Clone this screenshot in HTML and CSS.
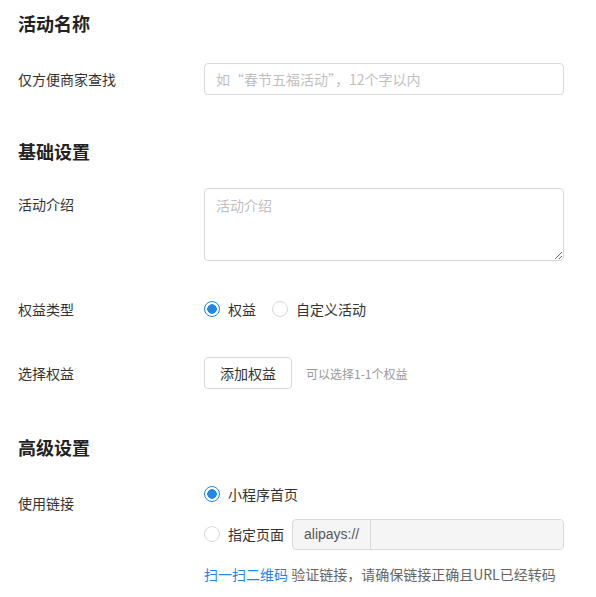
FILE: index.html
```html
<!DOCTYPE html>
<html lang="zh-CN">
<head>
  <meta charset="UTF-8" />
  <meta name="viewport" content="width=device-width, initial-scale=1" />
  <title>活动设置</title>
  <link rel="stylesheet" href="styles.css">
</head>
<body>

<form class="setting-form">
  <section class="section">
    <h2 class="section-title">活动名称</h2>
    <div class="form-row">
      <label class="form-label">仅方便商家查找</label>
      <div class="form-control">
        <input class="text-input" type="text" placeholder="如“春节五福活动”，12个字以内" />
      </div>
    </div>
  </section>

  <section class="section section--basic">
    <h2 class="section-title">基础设置</h2>
    <div class="form-row">
      <label class="form-label">活动介绍</label>
      <div class="form-control">
        <textarea class="text-area" placeholder="活动介绍"></textarea>
      </div>
    </div>
    <div class="form-row">
      <label class="form-label">权益类型</label>
      <div class="form-control radio-group">
        <label class="radio"><input type="radio" name="type" checked /><span class="radio-dot"></span>权益</label>
        <label class="radio"><input type="radio" name="type" /><span class="radio-dot"></span>自定义活动</label>
      </div>
    </div>
    <div class="form-row">
      <label class="form-label">选择权益</label>
      <div class="form-control inline">
        <button type="button" class="btn">添加权益</button>
        <span class="hint">可以选择1-1个权益</span>
      </div>
    </div>
  </section>

  <section class="section section--advanced">
    <h2 class="section-title">高级设置</h2>
    <div class="form-row">
      <label class="form-label form-label--offset">使用链接</label>
      <div class="form-control stack">
        <label class="radio"><input type="radio" name="link" checked /><span class="radio-dot"></span>小程序首页</label>
        <div class="inline">
          <label class="radio"><input type="radio" name="link" /><span class="radio-dot"></span>指定页面</label>
          <div class="input-group">
            <span class="addon">alipays://</span>
            <input class="group-input" type="text" disabled />
          </div>
        </div>
        <p class="help"><a href="#">扫一扫二维码</a> 验证链接，请确保链接正确且URL已经转码</p>
      </div>
    </div>
  </section>
</form>

</body>
</html>
```

FILE: styles.css
```css
body {
  margin: 0;
  font-family: "Noto Sans CJK SC", "Noto Sans", sans-serif;
  font-size: 14px;
  color: #333;
  background: #fff;
}
.setting-form {
  padding: 11px 18px 0;
}
.section {
  margin-bottom: 44px;
}
.section--basic {
  margin-bottom: 46px;
}
.section:last-child {
  margin-bottom: 0;
}
.section-title {
  margin: 0 0 28px;
  font-size: 18px;
  line-height: 24px;
  font-weight: bold;
  color: #222;
}
.section--basic .section-title {
  margin-bottom: 25px;
}
.section--advanced .section-title {
  margin-bottom: 19px;
}
.form-row {
  display: grid;
  grid-template-columns: 186px 360px;
  align-items: start;
  margin-bottom: 32px;
}
.form-row:last-child {
  margin-bottom: 0;
}
.form-label {
  line-height: 32px;
}
.form-label--offset {
  padding-top: 9px;
}
.text-input,
.text-area {
  box-sizing: border-box;
  width: 360px;
  border: 1px solid #d9d9d9;
  border-radius: 4px;
  font-family: inherit;
  font-size: 14px;
  color: #333;
  outline: none;
}
.text-input {
  height: 32px;
  padding: 0 11px;
}
.text-area {
  display: block;
  height: 73px;
  padding: 5px 11px;
  line-height: 22px;
  resize: vertical;
}
.text-input::placeholder,
.text-area::placeholder {
  color: #bfbfbf;
}
.radio-group,
.inline {
  display: flex;
  align-items: center;
  height: 32px;
}
.radio-group {
  gap: 16px;
}
.radio {
  display: inline-flex;
  align-items: center;
  line-height: 32px;
  cursor: pointer;
}
.radio input {
  display: none;
}
.radio-dot {
  box-sizing: border-box;
  width: 16px;
  height: 16px;
  margin-right: 8px;
  border: 1px solid #d9d9d9;
  border-radius: 50%;
  background: #fff;
}
.radio input:checked + .radio-dot {
  border-color: #1f87e8;
  background: radial-gradient(circle, #1f87e8 0 4.5px, #fff 5px);
}
.btn {
  height: 32px;
  padding: 0 15px;
  border: 1px solid #d9d9d9;
  border-radius: 4px;
  background: #fff;
  font-family: inherit;
  font-size: 14px;
  color: #333;
  cursor: pointer;
}
.hint {
  margin-left: 14px;
  font-size: 12px;
  color: #999;
}
.stack {
  display: flex;
  flex-direction: column;
  gap: 8px;
}
.input-group {
  display: flex;
  box-sizing: border-box;
  width: 272px;
  height: 31px;
  margin-left: 8px;
  border: 1px solid #d9d9d9;
  border-radius: 4px;
  background: #f5f5f5;
  overflow: hidden;
}
.addon {
  padding: 0 11px;
  line-height: 29px;
  color: #555;
  border-right: 1px solid #d9d9d9;
  font-family: "Liberation Sans", "Noto Sans CJK SC", sans-serif;
}
.group-input {
  flex: 1;
  min-width: 0;
  border: none;
  background: #f5f5f5;
}
.help {
  margin: 6px 0 0;
  line-height: 20px;
  color: #666;
}
.help a {
  color: #1f87e8;
  text-decoration: none;
}
```
